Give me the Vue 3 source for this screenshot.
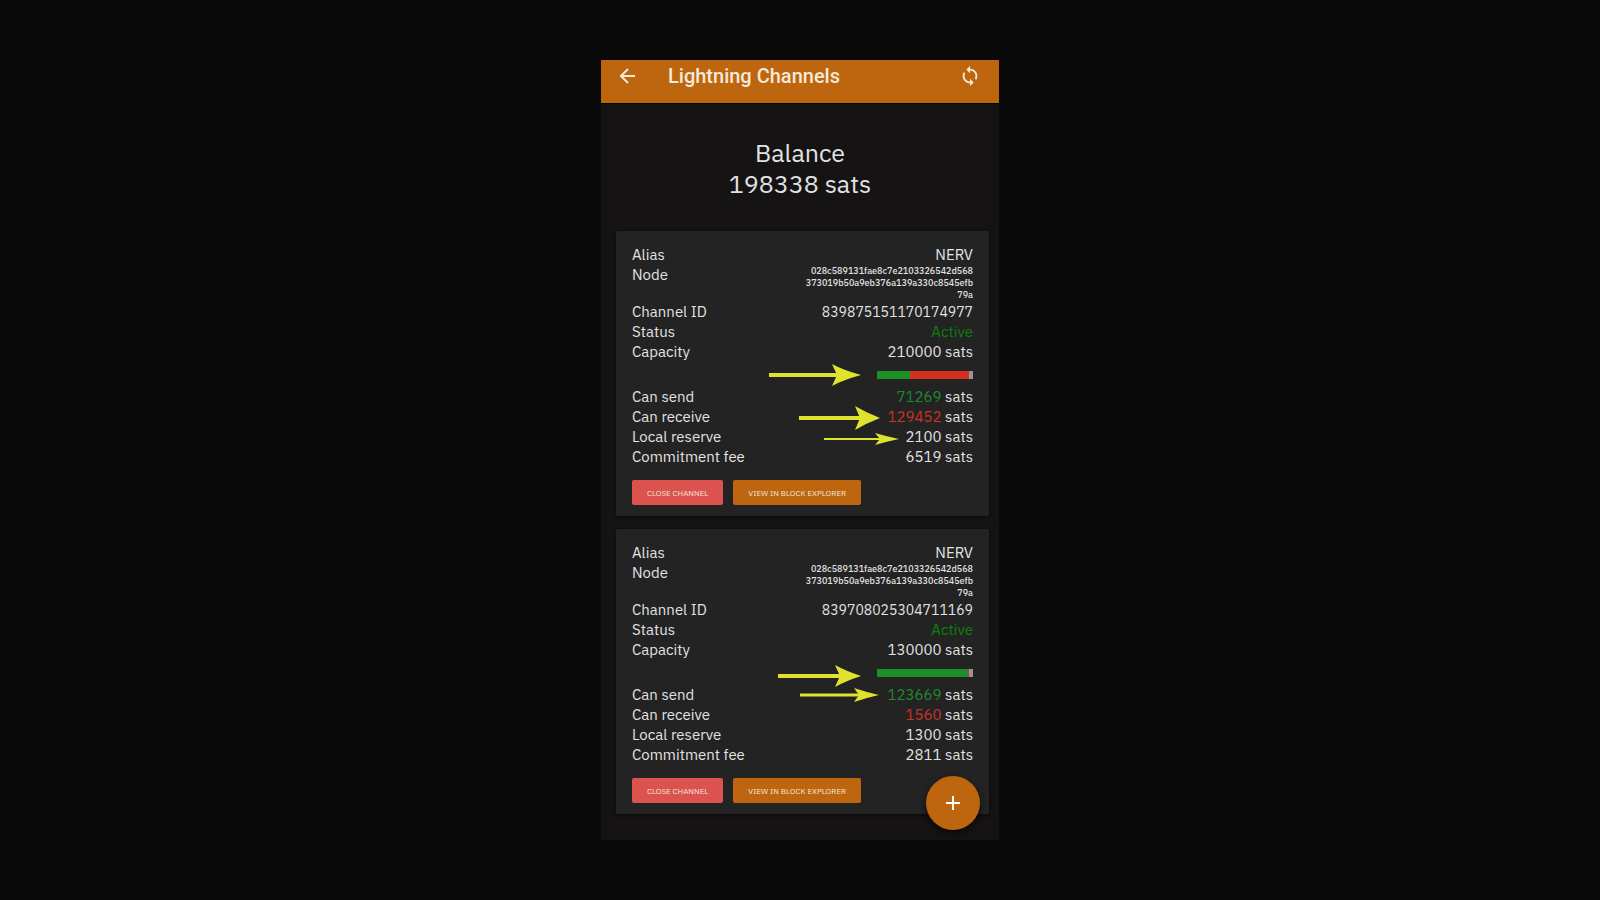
<script setup>
const node = ['028c589131fae8c7e2103326542d568', '373019b50a9eb376a139a330c8545efb', '79a']

const channels = [
  {
    alias: 'NERV', node, id: '839875151170174977', status: 'Active',
    capacity: 210000, send: 71269, receive: 129452, reserve: 2100, fee: 6519,
    arrows: [
      { x: 153, y: 144, neck: 216, tip: 245, half: 11, stroke: 4 },
      { x: 183, y: 187, neck: 239, tip: 264, half: 12, stroke: 4 },
      { x: 208, y: 208, neck: 259, tip: 283, half: 6, stroke: 2 },
    ],
  },
  {
    alias: 'NERV', node, id: '839708025304711169', status: 'Active',
    capacity: 130000, send: 123669, receive: 1560, reserve: 1300, fee: 2811,
    arrows: [
      { x: 162, y: 147, neck: 219, tip: 245, half: 11, stroke: 4 },
      { x: 184, y: 166, neck: 238, tip: 263, half: 7, stroke: 3 },
    ],
  },
]

const share = (part, whole) => ({ width: (part / whole) * 100 + '%' })

function headPath(a) {
  const back = a.neck + 5
  const bend = a.neck + 11
  const rise = a.half * 0.45
  return `M${a.neck} ${a.y - a.half}Q${bend} ${a.y - rise} ${a.tip} ${a.y}Q${bend} ${a.y + rise} ${a.neck} ${a.y + a.half}L${back} ${a.y}Z`
}
</script>

<template>
  <main class="page">
    <div class="phone">
      <header class="bar">
        <button class="icon" type="button" aria-label="Back">
          <svg width="18" height="18" viewBox="0 0 18 18" fill="none" stroke="currentColor" stroke-width="2">
            <path d="M16 9H2.500M9 2L2 9l7 7" />
          </svg>
        </button>
        <h1>Lightning Channels</h1>
        <button class="icon" type="button" aria-label="Refresh">
          <svg width="22" height="22" viewBox="0 0 24 24" fill="currentColor">
            <path d="M12 4V1L8 5l4 4V6c3.31 0 6 2.69 6 6 0 1.01-.25 1.97-.7 2.8l1.46 1.46C19.54 15.03 20 13.57 20 12c0-4.42-3.58-8-8-8zm0 14c-3.31 0-6-2.69-6-6 0-1.01.25-1.97.7-2.8L5.24 7.74C4.46 8.97 4 10.43 4 12c0 4.42 3.58 8 8 8v3l4-4-4-4v3z" />
          </svg>
        </button>
      </header>

      <section class="balance">
        <h2>Balance</h2>
        <p>198338 sats</p>
      </section>

      <section class="list">
        <article v-for="c in channels" :key="c.id" class="card">
          <dl>
            <div class="row"><dt>Alias</dt><dd>{{ c.alias }}</dd></div>
            <div class="row node">
              <dt>Node</dt>
              <dd><span v-for="line in c.node" :key="line">{{ line }}</span></dd>
            </div>
            <div class="row"><dt>Channel ID</dt><dd class="id">{{ c.id }}</dd></div>
            <div class="row"><dt>Status</dt><dd class="active">{{ c.status }}</dd></div>
            <div class="row"><dt>Capacity</dt><dd>{{ c.capacity }} sats</dd></div>
          </dl>
          <div class="meter">
            <i class="local" :style="share(c.send, c.capacity)"></i>
            <i class="remote" :style="share(c.receive, c.capacity)"></i>
          </div>
          <dl>
            <div class="row"><dt>Can send</dt><dd><span class="green">{{ c.send }}</span> sats</dd></div>
            <div class="row"><dt>Can receive</dt><dd><span class="red">{{ c.receive }}</span> sats</dd></div>
            <div class="row"><dt>Local reserve</dt><dd>{{ c.reserve }} sats</dd></div>
            <div class="row"><dt>Commitment fee</dt><dd>{{ c.fee }} sats</dd></div>
          </dl>
          <div class="actions">
            <button class="danger" type="button">CLOSE CHANNEL</button>
            <button type="button">VIEW IN BLOCK EXPLORER</button>
          </div>
          <svg class="arrows" width="373" height="285" viewBox="0 0 373 285" aria-hidden="true">
            <g v-for="a in c.arrows" :key="a.y">
              <path :d="`M${a.x} ${a.y}H${a.neck + 8}`" stroke="#dfe32d" :stroke-width="a.stroke" />
              <path :d="headPath(a)" fill="#dfe32d" />
            </g>
          </svg>
        </article>
      </section>

      <button class="fab" type="button" aria-label="Open channel">
        <svg width="14" height="14" viewBox="0 0 14 14" stroke="currentColor" stroke-width="2">
          <path d="M7 0v14M0 7h14" />
        </svg>
      </button>
    </div>
  </main>
</template>

<style>
body {
  background: #0a0a0a;
}
</style>

<style scoped>
* {
  box-sizing: border-box;
}
.page {
  display: flex;
  justify-content: center;
  align-items: center;
  min-height: 100vh;
  background: #0a0a0a;
  color: #e2e2e2;
  font-family: "IBM Plex Sans", "Noto Sans", sans-serif;
}
.phone {
  position: relative;
  width: 100%;
  max-width: 398px;
  padding-bottom: 26px;
  background: #151314;
}
h1, h2, p, dl, dd {
  margin: 0;
}
button {
  border: 0;
  padding: 0;
  font-family: inherit;
  cursor: pointer;
}
.bar {
  display: flex;
  align-items: center;
  padding: 4px 18px 15px;
  background: #bd660f;
  color: #f6e9d8;
  box-shadow: 0 1px 1px #000a;
}
h1 {
  flex: 1;
  margin-left: 31px;
  font: 500 20px/24px Roboto, sans-serif;
}
.icon {
  display: flex;
  background: none;
  color: inherit;
}
.balance {
  padding: 34px 0 32px;
  text-align: center;
  font-size: 25px;
  line-height: 31px;
}
h2 {
  font-size: inherit;
  font-weight: 400;
}
.list {
  display: grid;
  gap: 13px;
  padding: 0 10px 0 15px;
}
.card {
  position: relative;
  padding: 14px 16px 11px;
  background: #232323;
  border-radius: 2px;
  box-shadow: 0 1px 4px #0008;
}
.row {
  display: flex;
  justify-content: space-between;
  font-size: 15px;
  line-height: 20px;
}
.node {
  padding-bottom: 1px;
}
.node dd {
  font-size: 9px;
  font-weight: 500;
  line-height: 12px;
  text-align: right;
}
.node span {
  display: block;
}
.id {
  font-size: 14px;
}
.active {
  color: #0b800d;
}
.green {
  color: #208a2b;
}
.red {
  color: #cf3228;
}
.meter {
  display: flex;
  width: 96px;
  height: 8px;
  margin: 9px 0 8px auto;
  background: #959595;
}
.local {
  background: #1c8f27;
}
.remote {
  background: #d5301f;
}
.actions {
  display: flex;
  gap: 10px;
  margin-top: 13px;
}
.actions button {
  height: 25px;
  padding: 0 15px;
  border-radius: 2px;
  background: #bd660f;
  color: #f4e6d8;
  font-size: 8px;
}
.actions .danger {
  background: #dc524f;
}
.arrows {
  position: absolute;
  top: 0;
  right: 0;
  pointer-events: none;
}
.fab {
  position: absolute;
  right: 19px;
  bottom: 10px;
  display: flex;
  align-items: center;
  justify-content: center;
  width: 54px;
  height: 54px;
  border-radius: 50%;
  background: #bd660f;
  color: #fff;
  box-shadow: 0 3px 6px #0009;
}
</style>
